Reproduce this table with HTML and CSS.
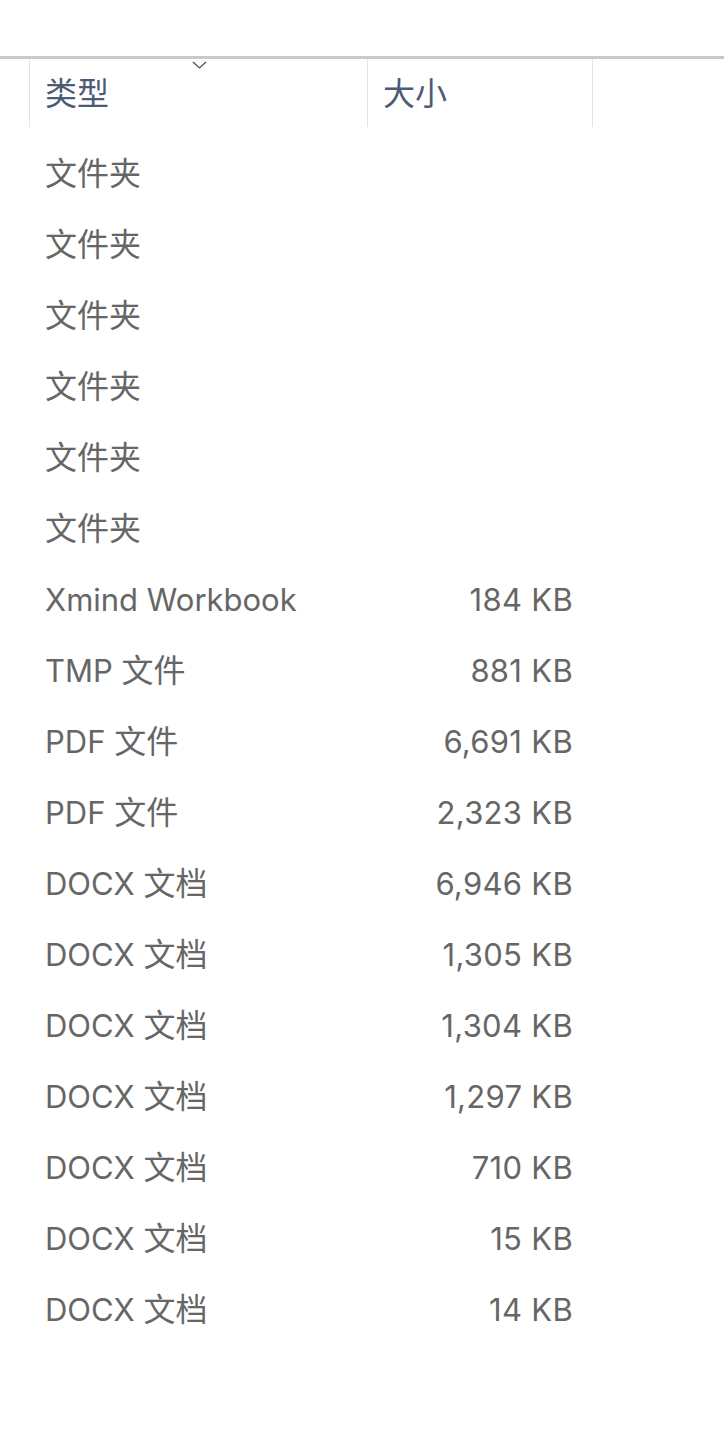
FILE: index.html
```html
<!DOCTYPE html>
<html lang="zh-CN">
<head>
<meta charset="utf-8">
<title>文件列表</title>
<link rel="stylesheet" href="styles.css">
</head>
<body>
<div class="top"></div>
<div class="list">
  <div class="header">
    <div class="hcell gutter"></div>
    <div class="hcell type">
      <svg class="chev" width="15" height="8" viewBox="0 0 15 8"><path d="M1 1 L7.5 7 L14 1" fill="none" stroke="#4a4a4a" stroke-width="1.1"/></svg>
      <span class="cjk">类型</span>
    </div>
    <div class="hcell size"><span class="cjk">大小</span></div>
    <div class="hcell rest"></div>
  </div>
  <div class="rows">
    <div class="row"><span class="t"><span class="cjk">文件夹</span></span><span class="s"></span></div>
    <div class="row"><span class="t"><span class="cjk">文件夹</span></span><span class="s"></span></div>
    <div class="row"><span class="t"><span class="cjk">文件夹</span></span><span class="s"></span></div>
    <div class="row"><span class="t"><span class="cjk">文件夹</span></span><span class="s"></span></div>
    <div class="row"><span class="t"><span class="cjk">文件夹</span></span><span class="s"></span></div>
    <div class="row"><span class="t"><span class="cjk">文件夹</span></span><span class="s"></span></div>
    <div class="row"><span class="t">Xmind Workbook</span><span class="s">184 KB</span></div>
    <div class="row"><span class="t">TMP <span class="cjk">文件</span></span><span class="s">881 KB</span></div>
    <div class="row"><span class="t">PDF <span class="cjk">文件</span></span><span class="s">6,691 KB</span></div>
    <div class="row"><span class="t">PDF <span class="cjk">文件</span></span><span class="s">2,323 KB</span></div>
    <div class="row"><span class="t">DOCX <span class="cjk">文档</span></span><span class="s">6,946 KB</span></div>
    <div class="row"><span class="t">DOCX <span class="cjk">文档</span></span><span class="s">1,305 KB</span></div>
    <div class="row"><span class="t">DOCX <span class="cjk">文档</span></span><span class="s">1,304 KB</span></div>
    <div class="row"><span class="t">DOCX <span class="cjk">文档</span></span><span class="s">1,297 KB</span></div>
    <div class="row"><span class="t">DOCX <span class="cjk">文档</span></span><span class="s">710 KB</span></div>
    <div class="row"><span class="t">DOCX <span class="cjk">文档</span></span><span class="s">15 KB</span></div>
    <div class="row"><span class="t">DOCX <span class="cjk">文档</span></span><span class="s">14 KB</span></div>
  </div>
</div>
</body>
</html>
```
FILE: styles.css
```css
html, body {
  margin: 0;
  padding: 0;
  background: #ffffff;
}
body {
  font-family: Inter, "Noto Sans CJK SC", sans-serif;
  font-size: 31px;
  line-height: 40px;
  color: #666666;
}
.cjk {
  font-family: "Noto Sans CJK SC", sans-serif;
  font-size: 32px;
  line-height: 20px;
}
.top {
  height: 56px;
  border-bottom: 3px solid #c9c9c9;
}
.header {
  display: grid;
  grid-template-columns: 29px 338px 225px 1fr;
  height: 68px;
}
.hcell {
  border-left: 1px solid #e3e3e3;
  display: flex;
  align-items: center;
  padding-left: 15px;
  padding-bottom: 4px;
  color: #4b5b76;
  position: relative;
}
.hcell.gutter {
  border-left: none;
  padding-left: 0;
}
.hcell.rest {
  border-left: 1px solid #e3e3e3;
}
.chev {
  position: absolute;
  left: 162px;
  top: 2px;
}
.rows {
  padding-top: 11px;
}
.row {
  display: grid;
  grid-template-columns: 45px 322px 206px;
  height: 71px;
  align-items: center;
}
.row .t {
  grid-column: 2;
  white-space: nowrap;
}
.row .s {
  grid-column: 3;
  text-align: right;
  white-space: nowrap;
  letter-spacing: 0.3px;
}
```
